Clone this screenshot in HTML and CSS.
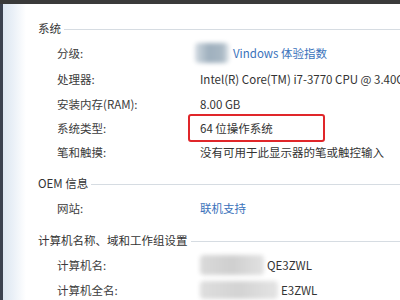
FILE: index.html
```html
<!DOCTYPE html>
<html>
  <head>
    <title>系统</title>
    <link rel="stylesheet" href="styles.css">
  </head>
  <body>
    <div class="topbar"></div>
    <div class="page">
      <!--系统-->
      <div class="section first">
        <div class="head"><span>系统</span><i></i></div>
        <div class="row tall">
          <span class="label">分级:</span>
          <span class="value"><b class="blur b1"></b><a class="link">Vindows 体验指数</a></span>
        </div>
        <div class="row tall">
          <span class="label">处理器:</span>
          <span class="value">Intel(R) Core(TM) i7-3770 CPU @ 3.40GHz</span>
        </div>
        <div class="row">
          <span class="label">安装内存(RAM):</span>
          <span class="value">8.00 GB</span>
        </div>
        <div class="row">
          <span class="label">系统类型:</span>
          <span class="value"><em class="mark">64 位操作系统</em></span>
        </div>
        <div class="row">
          <span class="label">笔和触摸:</span>
          <span class="value">没有可用于此显示器的笔或触控输入</span>
        </div>
      </div>
      <!--OEM 信息-->
      <div class="section">
        <div class="head"><span>OEM 信息</span><i></i></div>
        <div class="row tall">
          <span class="label">网站:</span>
          <span class="value"><a class="link">联机支持</a></span>
        </div>
      </div>
      <!--计算机名称-->
      <div class="section">
        <div class="head"><span>计算机名称、域和工作组设置</span><i></i></div>
        <div class="row tall">
          <span class="label">计算机名:</span>
          <span class="value"><b class="blur b2"></b>QE3ZWL</span>
        </div>
        <div class="row">
          <span class="label">计算机全名:</span>
          <span class="value"><b class="blur b3"></b>E3ZWL</span>
        </div>
      </div>
    </div>
  </body>
</html>
```

FILE: styles.css
```css
html,
body {
  margin: 0;
  height: 100%;
  overflow: hidden;
}
body {
  font-family: "Noto Sans CJK SC", "Liberation Sans", sans-serif;
  font-size: 11.5px;
  color: #333;
  background: linear-gradient(to right, #3b4250 0, #3b4250 3px, #dde7f2 3px, #eaf0f7 13px, #fff 26px);
}
.topbar {
  height: 4px;
  background-color: #3a3a3a;
}
.page {
  padding-left: 38px;
}
.section {
  margin-top: 7px;
}
.section.first {
  margin-top: 12px;
}
/*제목 + 가로줄*/
.head {
  display: flex;
  align-items: center;
  height: 24px;
}
.head i {
  flex: 1;
  height: 1px;
  margin: 2px 0 0 3px;
  background-color: #d6dce2;
}
.row {
  display: flex;
  align-items: center;
  height: 24px;
  white-space: nowrap;
}
.row.tall {
  height: 26px;
}
.label {
  flex-shrink: 0;
  width: 162px;
  padding-left: 19px;
  box-sizing: border-box;
  color: #3c3c3c;
}
.value {
  display: flex;
  align-items: center;
}
.link {
  color: #3a72bb;
}
.mark {
  font-style: normal;
  display: inline-block;
  margin-left: -12px;
  padding: 4px 50px 4px 10px;
  border: 2px solid #e0262a;
  border-radius: 3px;
}
/*가려진 부분*/
.blur {
  display: inline-block;
  filter: blur(2px);
  border-radius: 4px;
}
.b1 {
  width: 34px;
  height: 20px;
  margin-left: -5px;
  margin-right: 4px;
  background: linear-gradient(to right, #d3dbe2, #9fb0be 40%, #a9b8c4 80%, #dfe5ea);
}
.b2 {
  width: 64px;
  height: 20px;
  margin-right: 3px;
  background: linear-gradient(to right, #dadada, #cfcfcf 50%, #e2e2e2);
}
.b3 {
  width: 78px;
  height: 18px;
  margin-right: 3px;
  background: linear-gradient(to right, #dedede, #d3d3d3 50%, #e4e4e4);
}
```
